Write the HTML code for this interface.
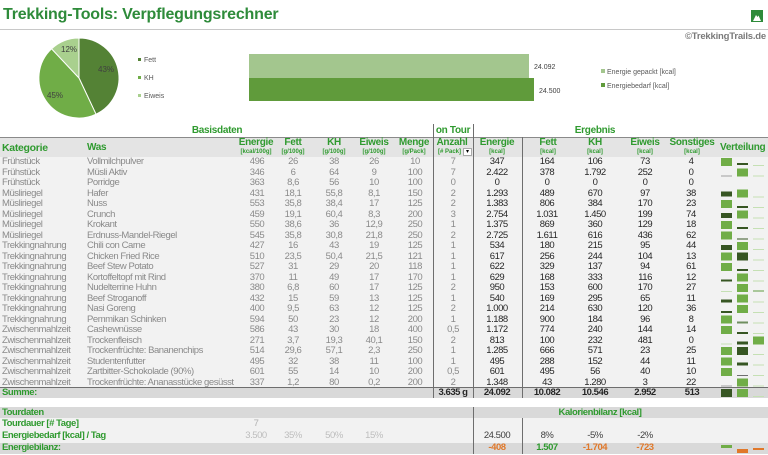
<!DOCTYPE html>
<html><head><meta charset="utf-8"><style>
*{margin:0;padding:0;box-sizing:border-box}
body{width:768px;height:455px;overflow:hidden;background:#fff;font-family:"Liberation Sans",Arial,sans-serif;position:relative}
.a{position:absolute;white-space:nowrap}
.t{position:absolute;white-space:nowrap;font-size:9.5px;line-height:10.5px;letter-spacing:-0.45px}
.c{transform:translateX(-50%)}
.g{color:#8a8a8a}
.k{color:#262626}
.h{color:#2f9a2f;font-weight:bold}
.hh{font-size:10px!important;letter-spacing:-0.3px}
.row{position:absolute;left:0;width:768px;height:10.5px;background:#f2f2f2}
.band{position:absolute;left:0;width:768px;background:#d9d9d9}
.vl{position:absolute;width:1.5px;background:#6e6e6e}
</style></head><body>
<div class="a" style="left:3px;top:6px;font-size:16px;font-weight:bold;color:#2e8b3a;letter-spacing:-0.2px">Trekking-Tools: Verpflegungsrechner</div>
<div class="a" style="left:751px;top:10px;width:12px;height:12px;background:#2e8b3a"><svg width="12" height="12"><path d="M2 10 L5 4 L6.5 6 L7.5 4.5 L10 10Z" fill="#fff"/></svg></div>
<div class="a" style="left:0;top:29px;width:768px;height:1px;background:#c8c8c8"></div>
<div class="a" style="right:2px;top:31px;font-size:9.5px;font-weight:bold;color:#7a7a7a;letter-spacing:-0.2px">©TrekkingTrails.de</div>

<svg class="a" style="left:0;top:0" width="768" height="125">
<path d="M79 38 A40 40 0 0 1 96 114.2 L79 78Z" fill="#548235" stroke="#fff" stroke-width="1"/>
<path d="M96 114.2 A40 40 0 0 1 51.6 48.8 L79 78Z" fill="#70ad47" stroke="#fff" stroke-width="1"/>
<path d="M51.6 48.8 A40 40 0 0 1 79 38 L79 78Z" fill="#a9d08e" stroke="#fff" stroke-width="1"/>
<text x="98" y="72" font-size="8" fill="#404040" font-family="Liberation Sans">43%</text>
<text x="47" y="98" font-size="8" fill="#404040" font-family="Liberation Sans">45%</text>
<text x="61" y="52" font-size="8" fill="#404040" font-family="Liberation Sans">12%</text>
<rect x="138" y="58" width="3" height="3" fill="#548235"/><text x="144" y="62" font-size="7" fill="#595959" font-family="Liberation Sans">Fett</text>
<rect x="138" y="76" width="3" height="3" fill="#70ad47"/><text x="144" y="80" font-size="7" fill="#595959" font-family="Liberation Sans">KH</text>
<rect x="138" y="94" width="3" height="3" fill="#a9d08e"/><text x="144" y="98" font-size="7" fill="#595959" font-family="Liberation Sans">Eiweis</text>
<rect x="249" y="54" width="280" height="24" fill="#a3c68e"/>
<rect x="249" y="78" width="285" height="23" fill="#609b3b"/>
<text x="534" y="69" font-size="7" fill="#404040" font-family="Liberation Sans">24.092</text>
<text x="539" y="93" font-size="7" fill="#404040" font-family="Liberation Sans">24.500</text>
<rect x="601" y="69" width="4" height="4" fill="#a3c68e"/><text x="607" y="74" font-size="7" fill="#595959" font-family="Liberation Sans">Energie gepackt [kcal]</text>
<rect x="601" y="83" width="4" height="4" fill="#609b3b"/><text x="607" y="88" font-size="7" fill="#595959" font-family="Liberation Sans">Energiebedarf [kcal]</text>
</svg>

<div class="t h c hh" style="left:217px;top:126px">Basisdaten</div>
<div class="t h c hh" style="left:453px;top:126px">on Tour</div>
<div class="t h c hh" style="left:595px;top:126px">Ergebnis</div>
<div class="band" style="top:137px;height:20px;background:#e4e4e4;border-top:1px solid #8a8a8a"></div>
<div class="t h hh" style="left:2px;top:143px;font-size:10.5px!important">Kategorie</div>
<div class="t h hh" style="left:87px;top:143px">Was</div>
<div class="t h c hh" style="left:256px;top:138px">Energie</div><div class="t h c" style="left:256px;top:149px;font-size:6px;line-height:7px;letter-spacing:0">[kcal/100g]</div>
<div class="t h c hh" style="left:293px;top:138px">Fett</div><div class="t h c" style="left:293px;top:149px;font-size:6px;line-height:7px;letter-spacing:0">[g/100g]</div>
<div class="t h c hh" style="left:334px;top:138px">KH</div><div class="t h c" style="left:334px;top:149px;font-size:6px;line-height:7px;letter-spacing:0">[g/100g]</div>
<div class="t h c hh" style="left:374px;top:138px">Eiweis</div><div class="t h c" style="left:374px;top:149px;font-size:6px;line-height:7px;letter-spacing:0">[g/100g]</div>
<div class="t h c hh" style="left:414px;top:138px">Menge</div><div class="t h c" style="left:414px;top:149px;font-size:6px;line-height:7px;letter-spacing:0">[g/Pack]</div>
<div class="t h c hh" style="left:452px;top:138px">Anzahl</div><div class="t h" style="left:438px;top:149px;font-size:6px;line-height:7px;letter-spacing:0">[# Pack]</div>
<div class="a" style="left:463px;top:148px;width:9px;height:8px;background:#fff;border:1px solid #aaa;font-size:6px;text-align:center;line-height:6px">▾</div>
<div class="t h c hh" style="left:497px;top:138px">Energie</div><div class="t h c" style="left:497px;top:149px;font-size:6px;line-height:7px;letter-spacing:0">[kcal]</div>
<div class="t h c hh" style="left:548px;top:138px">Fett</div><div class="t h c" style="left:548px;top:149px;font-size:6px;line-height:7px;letter-spacing:0">[kcal]</div>
<div class="t h c hh" style="left:595px;top:138px">KH</div><div class="t h c" style="left:595px;top:149px;font-size:6px;line-height:7px;letter-spacing:0">[kcal]</div>
<div class="t h c hh" style="left:645px;top:138px">Eiweis</div><div class="t h c" style="left:645px;top:149px;font-size:6px;line-height:7px;letter-spacing:0">[kcal]</div>
<div class="t h c hh" style="left:692px;top:138px">Sonstiges</div><div class="t h c" style="left:692px;top:149px;font-size:6px;line-height:7px;letter-spacing:0">[kcal]</div>
<div class="t h hh" style="left:720px;top:143px">Verteilung</div>

<div class="row" style="top:157px"></div><div class="row" style="top:167.5px"></div><div class="row" style="top:178px"></div><div class="row" style="top:188.5px"></div><div class="row" style="top:199px"></div><div class="row" style="top:209.5px"></div><div class="row" style="top:220px"></div><div class="row" style="top:230.5px"></div><div class="row" style="top:241px"></div><div class="row" style="top:251.5px"></div><div class="row" style="top:262px"></div><div class="row" style="top:272.5px"></div><div class="row" style="top:283px"></div><div class="row" style="top:293.5px"></div><div class="row" style="top:304px"></div><div class="row" style="top:314.5px"></div><div class="row" style="top:325px"></div><div class="row" style="top:335.5px"></div><div class="row" style="top:346px"></div><div class="row" style="top:356.5px"></div><div class="row" style="top:367px"></div><div class="row" style="top:377.5px"></div>

<div style="position:absolute;left:0;top:157px">
<div style="position:relative">
<div class="t g" style="left:2px;top:0">Frühstück<br>Frühstück<br>Frühstück<br>Müsliriegel<br>Müsliriegel<br>Müsliriegel<br>Müsliriegel<br>Müsliriegel<br>Trekkingnahrung<br>Trekkingnahrung<br>Trekkingnahrung<br>Trekkingnahrung<br>Trekkingnahrung<br>Trekkingnahrung<br>Trekkingnahrung<br>Trekkingnahrung<br>Zwischenmahlzeit<br>Zwischenmahlzeit<br>Zwischenmahlzeit<br>Zwischenmahlzeit<br>Zwischenmahlzeit<br>Zwischenmahlzeit</div>
<div class="t g" style="left:87px;top:0">Vollmilchpulver<br>Müsli Aktiv<br>Porridge<br>Hafer<br>Nuss<br>Crunch<br>Krokant<br>Erdnuss-Mandel-Riegel<br>Chili con Carne<br>Chicken Fried Rice<br>Beef Stew Potato<br>Kortoffeltopf mit Rind<br>Nudelterrine Huhn<br>Beef Stroganoff<br>Nasi Goreng<br>Pemmikan Schinken<br>Cashewnüsse<br>Trockenfleisch<br>Trockenfrüchte: Bananenchips<br>Studentenfutter<br>Zartbitter-Schokolade (90%)<br>Trockenfrüchte: Ananasstücke gesüsst</div>
<div class="t g c" style="left:257px;top:0;text-align:center">496<br>346<br>363<br>431<br>553<br>459<br>550<br>545<br>427<br>510<br>527<br>370<br>380<br>432<br>400<br>594<br>586<br>271<br>514<br>495<br>601<br>337</div>
<div class="t g c" style="left:293px;top:0;text-align:center">26<br>6<br>8,6<br>18,1<br>35,8<br>19,1<br>38,6<br>35,8<br>16<br>23,5<br>31<br>11<br>6,8<br>15<br>9,5<br>50<br>43<br>3,7<br>29,6<br>32<br>55<br>1,2</div>
<div class="t g c" style="left:334px;top:0;text-align:center">38<br>64<br>56<br>55,8<br>38,4<br>60,4<br>36<br>30,8<br>43<br>50,4<br>29<br>49<br>60<br>59<br>63<br>23<br>30<br>19,3<br>57,1<br>38<br>14<br>80</div>
<div class="t g c" style="left:374px;top:0;text-align:center">26<br>9<br>10<br>8,1<br>17<br>8,3<br>12,9<br>21,8<br>19<br>21,5<br>20<br>17<br>17<br>13<br>12<br>12<br>18<br>40,1<br>2,3<br>11<br>10<br>0,2</div>
<div class="t g c" style="left:415px;top:0;text-align:center">10<br>100<br>100<br>150<br>125<br>200<br>250<br>250<br>125<br>121<br>118<br>170<br>125<br>125<br>125<br>200<br>400<br>150<br>250<br>100<br>200<br>200</div>
<div class="t g c" style="left:453px;top:0;text-align:center">7<br>7<br>0<br>2<br>2<br>3<br>1<br>2<br>1<br>1<br>1<br>1<br>2<br>1<br>2<br>1<br>0,5<br>2<br>1<br>1<br>0,5<br>2</div>
<div class="t k c" style="left:497px;top:0;text-align:center">347<br>2.422<br>0<br>1.293<br>1.383<br>2.754<br>1.375<br>2.725<br>534<br>617<br>622<br>629<br>950<br>540<br>1.000<br>1.188<br>1.172<br>813<br>1.285<br>495<br>601<br>1.348</div>
<div class="t k c" style="left:547px;top:0;text-align:center">164<br>378<br>0<br>489<br>806<br>1.031<br>869<br>1.611<br>180<br>256<br>329<br>168<br>153<br>169<br>214<br>900<br>774<br>100<br>666<br>288<br>495<br>43</div>
<div class="t k c" style="left:595px;top:0;text-align:center">106<br>1.792<br>0<br>670<br>384<br>1.450<br>360<br>616<br>215<br>244<br>137<br>333<br>600<br>295<br>630<br>184<br>240<br>232<br>571<br>152<br>56<br>1.280</div>
<div class="t k c" style="left:645px;top:0;text-align:center">73<br>252<br>0<br>97<br>170<br>199<br>129<br>436<br>95<br>104<br>94<br>116<br>170<br>65<br>120<br>96<br>144<br>481<br>23<br>44<br>40<br>3</div>
<div class="t k c" style="left:691px;top:0;text-align:center">4<br>0<br>0<br>38<br>23<br>74<br>18<br>62<br>44<br>13<br>61<br>12<br>27<br>11<br>36<br>8<br>14<br>0<br>25<br>11<br>10<br>22</div>
</div></div>

<svg class="a" style="left:0;top:157px" width="768" height="242">
<rect x="721" y="1" width="11" height="8" fill="#70ad47"/><rect x="737" y="6" width="11" height="2" fill="#375623"/><rect x="753" y="8" width="11" height="1" fill="#c5e0b4"/>
<rect x="721" y="18.5" width="11" height="1" fill="#a0a0a0"/><rect x="737" y="11.5" width="11" height="8" fill="#70ad47"/><rect x="753" y="18.5" width="11" height="1" fill="#c5e0b4"/>
<rect x="721" y="34.5" width="11" height="5" fill="#375623"/><rect x="737" y="32.5" width="11" height="8" fill="#70ad47"/><rect x="753" y="39.5" width="11" height="1" fill="#c5e0b4"/>
<rect x="721" y="43" width="11" height="8" fill="#70ad47"/><rect x="737" y="49" width="11" height="2" fill="#375623"/><rect x="753" y="50" width="11" height="1" fill="#c5e0b4"/>
<rect x="721" y="56" width="11" height="5" fill="#375623"/><rect x="737" y="53.5" width="11" height="8" fill="#70ad47"/><rect x="753" y="60.5" width="11" height="1" fill="#c5e0b4"/>
<rect x="721" y="64" width="11" height="8" fill="#70ad47"/><rect x="737" y="70" width="11" height="2" fill="#375623"/><rect x="753" y="71" width="11" height="1" fill="#c5e0b4"/>
<rect x="721" y="74.5" width="11" height="8" fill="#70ad47"/><rect x="737" y="81.5" width="11" height="1" fill="#375623"/><rect x="753" y="81.5" width="11" height="1" fill="#c5e0b4"/>
<rect x="721" y="88" width="11" height="5" fill="#375623"/><rect x="737" y="85" width="11" height="8" fill="#70ad47"/><rect x="753" y="92" width="11" height="1" fill="#c5e0b4"/>
<rect x="721" y="95.5" width="11" height="8" fill="#70ad47"/><rect x="737" y="95.5" width="11" height="8" fill="#375623"/><rect x="753" y="102.5" width="11" height="1" fill="#c5e0b4"/>
<rect x="721" y="106" width="11" height="8" fill="#70ad47"/><rect x="737" y="112" width="11" height="2" fill="#375623"/><rect x="753" y="113" width="11" height="1" fill="#c5e0b4"/>
<rect x="721" y="122.5" width="11" height="2" fill="#375623"/><rect x="737" y="116.5" width="11" height="8" fill="#70ad47"/><rect x="753" y="123.5" width="11" height="1" fill="#c5e0b4"/>
<rect x="721" y="134" width="11" height="1" fill="#c5e0b4"/><rect x="737" y="127" width="11" height="8" fill="#70ad47"/><rect x="753" y="133" width="11" height="2" fill="#a9c79a"/>
<rect x="721" y="142.5" width="11" height="3" fill="#375623"/><rect x="737" y="137.5" width="11" height="8" fill="#70ad47"/><rect x="753" y="144.5" width="11" height="1" fill="#c5e0b4"/>
<rect x="721" y="154" width="11" height="2" fill="#375623"/><rect x="737" y="148" width="11" height="8" fill="#70ad47"/><rect x="753" y="155" width="11" height="1" fill="#c5e0b4"/>
<rect x="721" y="158.5" width="11" height="8" fill="#70ad47"/><rect x="737" y="164.5" width="11" height="2" fill="#6f8f5f"/><rect x="753" y="165.5" width="11" height="1" fill="#c5e0b4"/>
<rect x="721" y="169" width="11" height="8" fill="#70ad47"/><rect x="737" y="175" width="11" height="2" fill="#375623"/><rect x="753" y="176" width="11" height="1" fill="#c5e0b4"/>
<rect x="721" y="186.5" width="11" height="1" fill="#c5e0b4"/><rect x="737" y="184.5" width="11" height="3" fill="#375623"/><rect x="753" y="179.5" width="11" height="8" fill="#70ad47"/>
<rect x="721" y="190" width="11" height="8" fill="#70ad47"/><rect x="737" y="190" width="11" height="8" fill="#375623"/><rect x="753" y="197" width="11" height="1" fill="#c5e0b4"/>
<rect x="721" y="200.5" width="11" height="8" fill="#70ad47"/><rect x="737" y="205.5" width="11" height="3" fill="#375623"/><rect x="753" y="207.5" width="11" height="1" fill="#c5e0b4"/>
<rect x="721" y="211" width="11" height="8" fill="#70ad47"/><rect x="737" y="218" width="11" height="1" fill="#6f6f6f"/><rect x="753" y="218" width="11" height="1" fill="#c5e0b4"/>
<rect x="721" y="228.5" width="11" height="1" fill="#a0a0a0"/><rect x="737" y="221.5" width="11" height="8" fill="#70ad47"/><rect x="753" y="228.5" width="11" height="1" fill="#c5e0b4"/>
</svg>

<div class="band" style="top:387px;height:11px;border-top:1px solid #6e6e6e"></div>
<div class="t h" style="left:2px;top:388px">Summe:</div>
<div class="t k c" style="left:453px;top:388px;font-weight:bold">3.635 g</div>
<div class="t k c" style="left:497px;top:388px;font-weight:bold">24.092</div>
<div class="t k c" style="left:547px;top:388px;font-weight:bold">10.082</div>
<div class="t k c" style="left:595px;top:388px;font-weight:bold">10.546</div>
<div class="t k c" style="left:645px;top:388px;font-weight:bold">2.952</div>
<div class="t k c" style="left:692px;top:388px;font-weight:bold">513</div>
<div class="a" style="left:721px;top:389px;width:11px;height:8px;background:#375623"></div>
<div class="a" style="left:737px;top:389px;width:11px;height:8px;background:#70ad47"></div>
<div class="a" style="left:753px;top:396px;width:11px;height:1px;background:#c5e0b4"></div>

<div class="vl" style="left:432.5px;top:124px;height:274px"></div>
<div class="vl" style="left:472.5px;top:124px;height:274px"></div>
<div class="vl" style="left:521.5px;top:137px;height:261px"></div>

<div class="band" style="top:407px;height:11px"></div>
<div class="row" style="top:418px;height:25px;background:#f2f2f2"></div>
<div class="band" style="top:443px;height:11px"></div>
<div class="t h" style="left:2px;top:408px">Tourdaten</div>
<div class="t h c" style="left:600px;top:408px">Kalorienbilanz [kcal]</div>
<div class="t h" style="left:2px;top:419px">Tourdauer [# Tage]</div>
<div class="t c" style="left:256px;top:419px;color:#b0b0b0">7</div>
<div class="t h" style="left:2px;top:431px">Energiebedarf [kcal] / Tag</div>
<div class="t c" style="left:256px;top:431px;color:#bdbdbd">3.500</div>
<div class="t c" style="left:293px;top:431px;color:#bdbdbd">35%</div>
<div class="t c" style="left:334px;top:431px;color:#bdbdbd">50%</div>
<div class="t c" style="left:374px;top:431px;color:#bdbdbd">15%</div>
<div class="t c" style="left:497px;top:431px;color:#404040">24.500</div>
<div class="t c" style="left:547px;top:431px;color:#404040">8%</div>
<div class="t c" style="left:595px;top:431px;color:#404040">-5%</div>
<div class="t c" style="left:645px;top:431px;color:#404040">-2%</div>
<div class="t h" style="left:2px;top:443px">Energiebilanz:</div>
<div class="t c" style="left:497px;top:443px;color:#e0782a;font-weight:bold">-408</div>
<div class="t h c" style="left:547px;top:443px">1.507</div>
<div class="t c" style="left:595px;top:443px;color:#e0782a;font-weight:bold">-1.704</div>
<div class="t c" style="left:645px;top:443px;color:#e0782a;font-weight:bold">-723</div>
<div class="a" style="left:721px;top:445px;width:11px;height:3px;background:#70ad47"></div>
<div class="a" style="left:737px;top:449px;width:11px;height:4px;background:#e0782a"></div>
<div class="a" style="left:753px;top:448px;width:11px;height:2px;background:#e0782a"></div>
<div class="vl" style="left:472.5px;top:407px;height:47px"></div>
<div class="vl" style="left:521.5px;top:418px;height:36px"></div>
</body></html>
